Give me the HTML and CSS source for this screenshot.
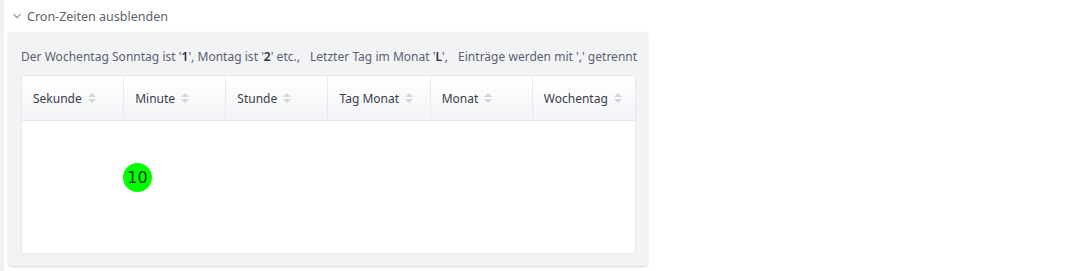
FILE: index.html
```html
<!DOCTYPE html>
<html lang="de">
<head>
  <meta charset="UTF-8" />
  <title>Cron-Zeiten</title>
  <link rel="stylesheet" href="styles.css">
</head>
<body>
  <div class="page">
    <div class="collapse-head">
      <svg class="chevron" width="10" height="10" viewBox="0 0 10 10">
        <path d="M1.5 3.2 L5 6.7 L8.5 3.2" fill="none" stroke="#8a8f99" stroke-width="1.2"/>
      </svg>
      <span>Cron-Zeiten ausblenden</span>
    </div>

    <div class="panel">
      <div class="hint">
        <span>Der Wochentag Sonntag ist '<b>1</b>', Montag ist '<b>2</b>' etc.,</span>
        <span>Letzter Tag im Monat '<b>L</b>',</span>
        <span>Einträge werden mit ',' getrennt</span>
      </div>

      <div class="table">
        <div class="thead">
          <div class="th">Sekunde <i class="sort"></i></div>
          <div class="th">Minute <i class="sort"></i></div>
          <div class="th">Stunde <i class="sort"></i></div>
          <div class="th">Tag Monat <i class="sort"></i></div>
          <div class="th">Monat <i class="sort"></i></div>
          <div class="th">Wochentag <i class="sort"></i></div>
        </div>
        <div class="tbody"></div>
        <div class="badge">10</div>
      </div>
    </div>
  </div>
</body>
</html>
```

FILE: styles.css
```css
* {
  margin: 0;
  padding: 0;
  box-sizing: border-box;
}

body {
  background: #ffffff;
  font-family: 'Noto Sans', sans-serif;
  color: #5a5e66;
}

.page {
  padding: 0 0 0 8px;
  width: 656px;
  border-left: 4px solid #f0f1f3;
  min-height: 271px;
}

.collapse-head {
  display: flex;
  align-items: center;
  height: 32px;
  font-size: 12.5px;
  color: #606266;
}

.chevron {
  margin-right: 5px;
}

.panel {
  width: 640px;
  margin-left: -4px;
  background: #f2f3f5;
  border-radius: 4px;
  padding: 10px 12px 12px 13px;
  box-shadow: 0 1px 2px rgba(0, 0, 0, 0.15);
}

.hint {
  display: flex;
  gap: 10px;
  font-size: 12px;
  letter-spacing: 0.02px;
  white-space: nowrap;
  color: #5c5f72;
  height: 33px;
  padding-bottom: 4px;
  align-items: center;
}

.hint b {
  color: #303133;
  font-weight: 600;
}

.table {
  position: relative;
  background: #fff;
  border: 1px solid #e4e7ed;
  border-radius: 3px;
  height: 179px;
}

.thead {
  display: grid;
  grid-template-columns: repeat(6, 1fr);
  height: 45px;
  background: linear-gradient(#ffffff, #f3f4f7);
  border-bottom: 1px solid #e4e7ed;
}

.th {
  display: flex;
  align-items: center;
  padding-left: 11px;
  font-size: 12px;
  color: #3a3d4a;
  border-right: 1px solid #e8eaef;
}

.th:last-child {
  border-right: none;
}

.sort {
  display: inline-block;
  width: 8px;
  height: 10px;
  margin-left: 6px;
  position: relative;
}

.sort::before,
.sort::after {
  content: "";
  position: absolute;
  left: 0;
  border-left: 4px solid transparent;
  border-right: 4px solid transparent;
}

.sort::before {
  top: 0;
  border-bottom: 4px solid #d3d5da;
}

.sort::after {
  bottom: 0;
  border-top: 4px solid #d3d5da;
}

.badge {
  position: absolute;
  left: 101px;
  top: 87px;
  width: 29px;
  height: 29px;
  border-radius: 50%;
  background: #00ff00;
  color: #1a3a1a;
  font-family: 'DejaVu Sans', sans-serif;
  font-size: 16px;
  display: flex;
  align-items: center;
  justify-content: center;
}
```
